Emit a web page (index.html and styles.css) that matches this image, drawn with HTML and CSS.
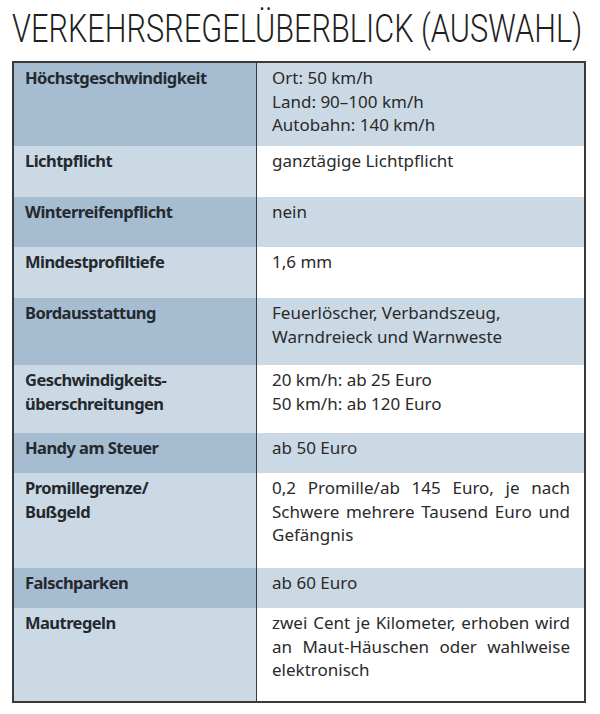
FILE: index.html
```html
<!DOCTYPE html>
<html lang="de">
<head>
<meta charset="utf-8">
<title>Verkehrsregelüberblick</title>
<link rel="stylesheet" href="styles.css">
</head>
<body>
<h1 class="title"><span class="title-text">VERKEHRSREGELÜBERBLICK (AUSWAHL)</span></h1>
<div class="table">
  <div class="row dark h83">
    <div class="key">Höchstgeschwindigkeit</div>
    <div class="val">Ort: 50 km/h<br>Land: 90–100 km/h<br>Autobahn: 140 km/h</div>
  </div>
  <div class="row light h51">
    <div class="key">Lichtpflicht</div>
    <div class="val">ganztägige Lichtpflicht</div>
  </div>
  <div class="row dark h50">
    <div class="key">Winterreifenpflicht</div>
    <div class="val">nein</div>
  </div>
  <div class="row light h51">
    <div class="key">Mindestprofiltiefe</div>
    <div class="val">1,6 mm</div>
  </div>
  <div class="row dark h67">
    <div class="key">Bordausstattung</div>
    <div class="val">Feuerlöscher, Verbandszeug,<br>Warndreieck und Warnweste</div>
  </div>
  <div class="row light h68">
    <div class="key">Geschwindigkeits-<br>überschreitungen</div>
    <div class="val">20 km/h: ab 25 Euro<br>50 km/h: ab 120 Euro</div>
  </div>
  <div class="row dark h40">
    <div class="key">Handy am Steuer</div>
    <div class="val">ab 50 Euro</div>
  </div>
  <div class="row light h95">
    <div class="key">Promillegrenze/<br>Bußgeld</div>
    <div class="val just">0,2 Promille/ab 145 Euro, je nach Schwere mehrere Tausend Euro und Gefängnis</div>
  </div>
  <div class="row dark h40">
    <div class="key">Falschparken</div>
    <div class="val">ab 60 Euro</div>
  </div>
  <div class="row light h93">
    <div class="key">Mautregeln</div>
    <div class="val just">zwei Cent je Kilometer, erhoben wird an Maut-Häuschen oder wahlweise elektronisch</div>
  </div>
</div>
</body>
</html>
```

FILE: styles.css
```css
html, body {
  margin: 0;
  padding: 0;
  background: #ffffff;
}

body {
  font-family: "Noto Sans", "Open Sans", "DejaVu Sans", sans-serif;
  color: #262626;
}

.title {
  margin: 0;
  padding: 7px 0 0 12px;
  height: 53px;
  box-sizing: border-box;
  overflow: hidden;
  font-family: Roboto, "Noto Sans", sans-serif;
  font-size: 38px;
  line-height: 44px;
  font-weight: 300;
  color: #1f1f1f;
  white-space: nowrap;
}

.title-text {
  display: inline-block;
  transform: scaleX(0.808);
  transform-origin: left center;
}

.table {
  margin: 8px 0 0 12px;
  width: 574px;
  box-sizing: border-box;
  border: 2px solid #3a3a3a;
}

.row {
  display: grid;
  grid-template-columns: 243px 1fr;
}

.key,
.val {
  padding: 3px 14px 0 11px;
  font-size: 17px;
  line-height: 23.5px;
}

.key {
  font-size: 16.5px;
  font-weight: 700;
  letter-spacing: -0.55px;
  color: #24292e;
  border-right: 1px solid #3a3a3a;
}

.val {
  padding-left: 15px;
  color: #2a2a2a;
}

.just {
  text-align: justify;
}

.dark .key { background: #a5bcd1; }
.dark .val { background: #cbd9e5; }
.light .key { background: #cbd9e5; }
.light .val { background: #ffffff; }

.h83 { height: 83px; }
.h51 { height: 51px; }
.h50 { height: 50px; }
.h67 { height: 67px; }
.h68 { height: 68px; }
.h40 { height: 40px; }
.h95 { height: 95px; }
.h93 { height: 93px; }
```
